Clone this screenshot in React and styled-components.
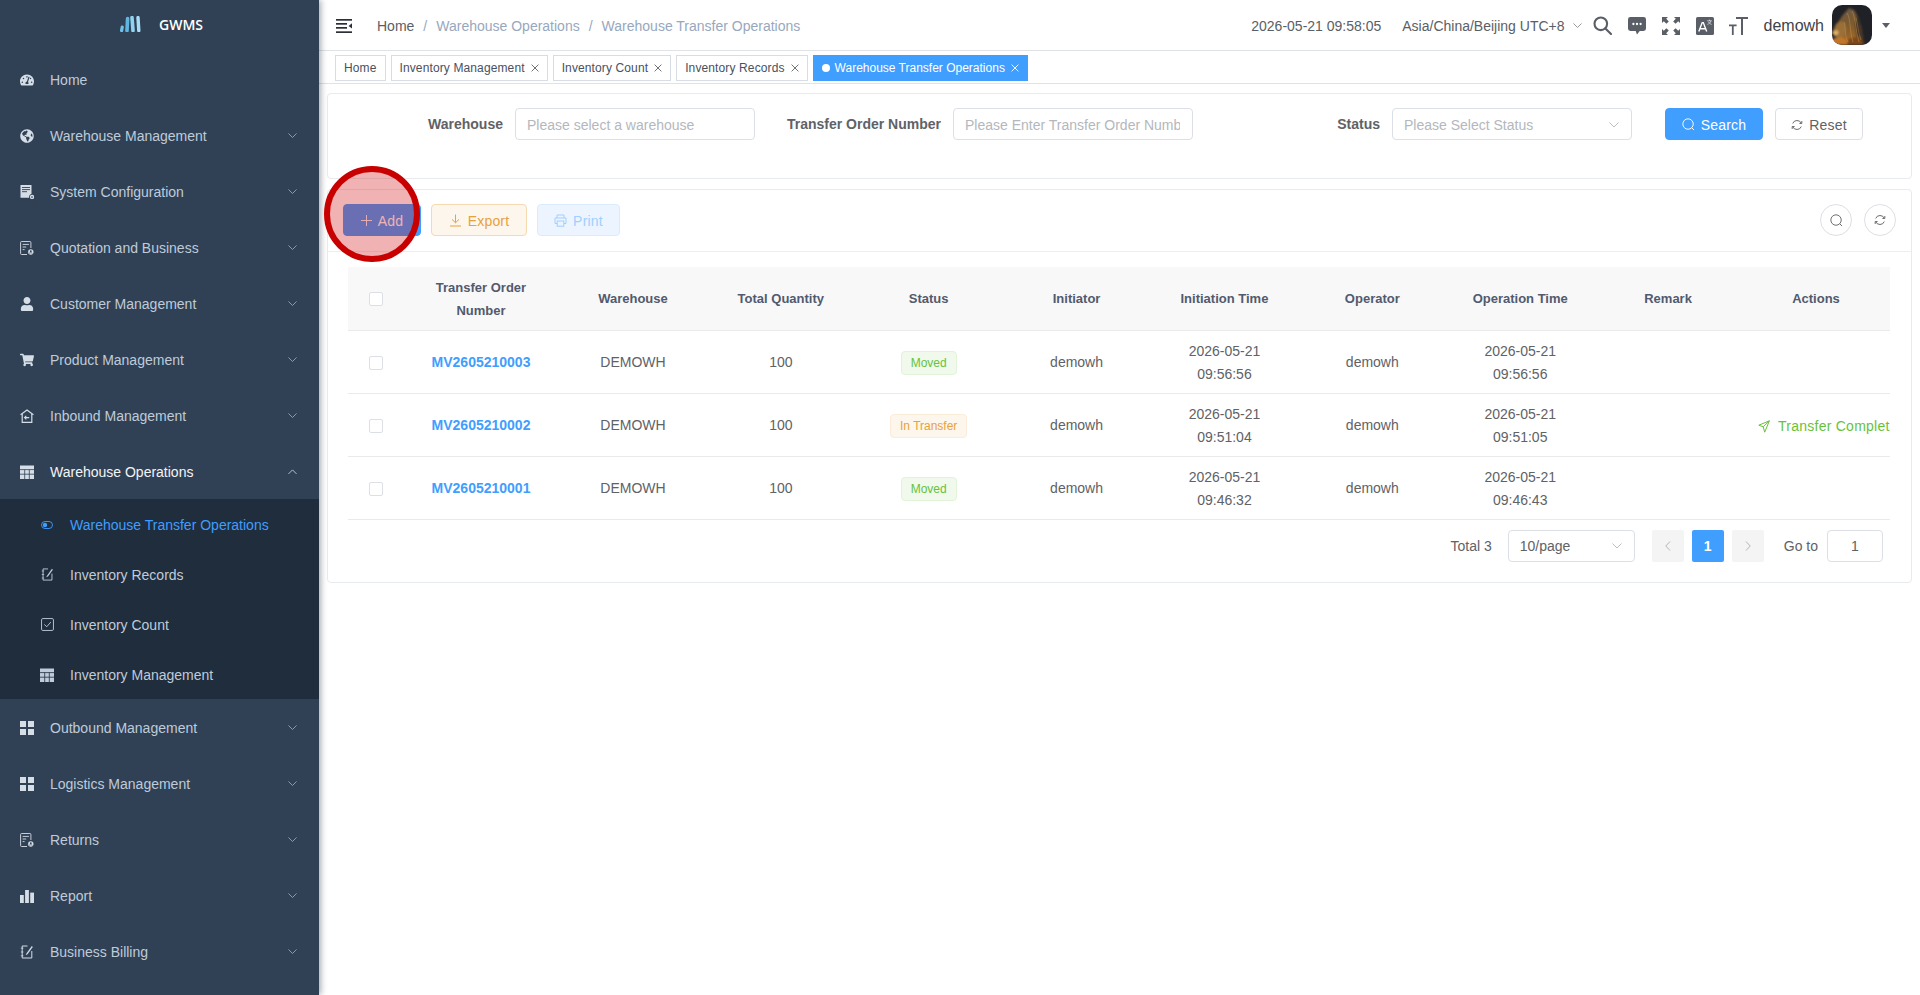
import styled, { createGlobalStyle } from 'styled-components';
import { FaTachometerAlt, FaGlobeAmericas, FaUser, FaShoppingCart } from 'react-icons/fa';

const GlobalStyle = createGlobalStyle`
  html, body {
    margin: 0;
    padding: 0;
    background: #fff;
  }
  body {
    font-family: "Liberation Sans", Arial, sans-serif;
    font-size: 14px;
    color: #606266;
  }
  * {
    box-sizing: border-box;
  }
`;

const Page = styled.div`
  display: flex;
  width: 1920px;
  height: 995px;
  overflow: hidden;
  position: relative;
`;

const Sidebar = styled.aside`
  flex: 0 0 319px;
  height: 100%;
  background: #304156;
  box-shadow: 2px 0 6px rgba(0, 21, 41, 0.35);
  z-index: 2;
`;

const LogoRow = styled.div`
  display: flex;
  align-items: center;
  gap: 17px;
  height: 48px;
  margin-bottom: 3px;
  padding-left: 120px;
`;

const LogoText = styled.span`
  color: #fff;
  font-family: "Open Sans", sans-serif;
  font-size: 14px;
  font-weight: 600;
`;

const MenuRow = styled.div`
  display: flex;
  align-items: center;
  height: 56px;
  padding: 1px 22px 0 20px;
  color: ${({ $open }) => ($open ? '#f4f4f5' : '#bfcbd9')};
`;

const MenuIcon = styled.span`
  display: flex;
  flex: 0 0 14px;
  justify-content: center;
  font-size: 14px;
  margin-right: 16px;
  color: #d5dde6;
`;

const MenuLabel = styled.span`
  flex: 1;
`;

const SubMenu = styled.div`
  background: #1f2d3d;
`;

const SubRow = styled.div`
  display: flex;
  align-items: center;
  height: 50px;
  padding: 1px 0 0 40px;
  color: ${({ $active }) => ($active ? '#409eff' : '#bfcbd9')};
`;

const SubIcon = styled.span`
  display: flex;
  flex: 0 0 14px;
  justify-content: center;
  margin-right: 16px;
  color: ${({ $active }) => ($active ? '#409eff' : '#bfcbd9')};
`;

const Main = styled.main`
  flex: 1;
  min-width: 0;
`;

const Header = styled.header`
  display: flex;
  align-items: center;
  height: 51px;
  padding: 1px 30px 0 17px;
  border-bottom: 1px solid #dfe3e8;
`;

const Breadcrumb = styled.nav`
  display: flex;
  align-items: center;
  margin-left: 25px;
  color: #97a8be;
`;

const Crumb = styled.span`
  color: ${({ $home }) => ($home ? '#5a5e66' : '#97a8be')};
`;

const Slash = styled.span`
  margin: 0 9px;
  color: #97a8be;
`;

const HeaderRight = styled.div`
  display: flex;
  align-items: center;
  margin-left: auto;
  color: #5a5e66;
`;

const Clock = styled.span`
  margin-right: 21px;
`;

const Zone = styled.span`
  display: flex;
  align-items: center;
  gap: 8px;
  margin-right: 4px;
`;

const HeaderIcon = styled.span`
  display: flex;
  justify-content: center;
  width: 34px;
  color: #5a5e66;
`;

const UserName = styled.span`
  margin-left: 8px;
  font-size: 16px;
  color: #3f4247;
`;

const Avatar = styled.span`
  display: block;
  width: 40px;
  height: 40px;
  margin: -1px 0 0 8px;
  border-radius: 10px;
  overflow: hidden;
`;

const Caret = styled.span`
  width: 0;
  height: 0;
  margin-left: 10px;
  border-left: 4px solid transparent;
  border-right: 4px solid transparent;
  border-top: 5px solid #5a5e66;
`;

const TagBar = styled.div`
  display: flex;
  gap: 5px;
  height: 33px;
  padding: 4px 0 0 16px;
  border-bottom: 1px solid #dfe3e8;
`;

const Tag = styled.span`
  display: flex;
  align-items: center;
  height: 26px;
  padding: 0 8px;
  font-size: 12px;
  letter-spacing: ${({ $active }) => ($active ? 0 : '0.12px')};
  color: ${({ $active }) => ($active ? '#fff' : '#495060')};
  background: ${({ $active }) => ($active ? '#409eff' : '#fff')};
  border: 1px solid ${({ $active }) => ($active ? '#409eff' : '#d8dce5')};
`;

const TagDot = styled.i`
  width: 8px;
  height: 8px;
  margin-right: 5px;
  border-radius: 50%;
  background: #fff;
`;

const TagClose = styled.span`
  display: flex;
  margin-left: 6px;
`;

const Content = styled.div`
  padding: 9px 8px 0;
`;

const Card = styled.section`
  border: 1px solid #e6ebf0;
  border-radius: 4px;
  background: #fff;
`;

const SearchCard = styled(Card)`
  display: flex;
  align-items: flex-start;
  height: 86px;
  padding-top: 14px;
  margin-bottom: 10px;
`;

const Field = styled.div`
  display: flex;
  align-items: center;
`;

const FieldLabel = styled.label`
  width: ${({ $width }) => $width}px;
  padding-right: 12px;
  text-align: right;
  font-weight: 700;
  color: #606266;
  white-space: nowrap;
`;

const InputBox = styled.div`
  display: flex;
  align-items: center;
  justify-content: space-between;
  width: ${({ $width }) => $width}px;
  height: 32px;
  padding: 1px 12px 0 11px;
  border: 1px solid #dcdfe6;
  border-radius: 4px;
  color: ${({ $filled }) => ($filled ? '#606266' : '#b4b7bd')};
  overflow: hidden;
  white-space: nowrap;
`;

const ClippedText = styled.span`
  display: block;
  flex: 1;
  overflow: hidden;
`;

const SearchActions = styled.div`
  display: flex;
  gap: 12px;
  margin-left: 33px;
`;

const tones = {
  primary: { color: '#fff', bg: '#409eff', border: '#409eff' },
  plain: { color: '#606266', bg: '#fff', border: '#dcdfe6' },
  warning: { color: '#e6a23c', bg: '#fdf6ec', border: '#f5dab1' },
  disabled: { color: '#a0cfff', bg: '#ecf5ff', border: '#d9ecff' },
};

const Button = styled.button`
  display: inline-flex;
  align-items: center;
  justify-content: center;
  gap: 6px;
  width: ${({ $width }) => $width}px;
  height: 32px;
  padding: 1px 0 0;
  font: inherit;
  letter-spacing: 0.2px;
  color: ${({ $tone }) => tones[$tone].color};
  background: ${({ $tone }) => tones[$tone].bg};
  border: 1px solid ${({ $tone }) => tones[$tone].border};
  border-radius: 4px;
`;

const Toolbar = styled.div`
  display: flex;
  align-items: center;
  gap: 10px;
  height: 62px;
  padding: 0 15px 1px;
  border-bottom: 1px solid #ebeef5;
`;

const ToolbarEnd = styled.div`
  display: flex;
  gap: 12px;
  margin-left: auto;
`;

const CircleButton = styled.button`
  display: flex;
  align-items: center;
  justify-content: center;
  width: 32px;
  height: 32px;
  padding: 0;
  color: #606266;
  background: #fff;
  border: 1px solid #dcdfe6;
  border-radius: 50%;
`;

const TableWrap = styled.div`
  padding: 15px 21px 0 20px;
`;

const Table = styled.table`
  width: 100%;
  table-layout: fixed;
  border-collapse: collapse;
`;

const ColCheck = styled.col`
  width: 55px;
`;

const ColOrder = styled.col`
  width: 156px;
`;

const HeadCell = styled.th`
  height: 63px;
  padding: 1px ${({ $flush }) => ($flush ? 0 : '18px')} 0;
  font-size: 13px;
  font-weight: 700;
  line-height: 23px;
  color: #515a6e;
  text-align: center;
  background: #f8f8f9;
  border-bottom: 1px solid #e8eaec;
`;

const Cell = styled.td`
  height: 63px;
  padding: 2px ${({ $flush }) => ($flush ? 0 : '18px')} 0;
  line-height: 23px;
  text-align: center;
  color: #606266;
  border-bottom: 1px solid #e8eaec;
`;

const ActionCell = styled(Cell)`
  padding: 5px 0 0 16px;
  text-align: left;
  overflow: hidden;
  white-space: nowrap;
`;

const Checkbox = styled.span`
  display: block;
  width: 14px;
  height: 14px;
  margin: 0 auto 0 21px;
  border: 1px solid #dcdfe6;
  border-radius: 2px;
  background: #fff;
`;

const OrderLink = styled.a`
  font-weight: 700;
  color: #409eff;
`;

const Status = styled.span`
  display: inline-block;
  height: 24px;
  padding: 0 9px;
  font-size: 12px;
  line-height: 22px;
  border-radius: 4px;
  color: ${({ $moved }) => ($moved ? '#67c23a' : '#e6a23c')};
  background: ${({ $moved }) => ($moved ? '#f0f9eb' : '#fdf6ec')};
  border: 1px solid ${({ $moved }) => ($moved ? '#e1f3d8' : '#faecd8')};
`;

const ActionLink = styled.span`
  display: inline-flex;
  align-items: center;
  gap: 8px;
  letter-spacing: 0.25px;
  color: #67c23a;
`;

const Pagination = styled.div`
  display: flex;
  align-items: center;
  justify-content: flex-end;
  height: 32px;
  margin: 10px 7px 20px 0;
  color: #606266;
`;

const PageButton = styled.span`
  display: flex;
  align-items: center;
  justify-content: center;
  width: 32px;
  height: 32px;
  margin-left: ${({ $gap }) => $gap}px;
  border-radius: 2px;
  font-weight: ${({ $current }) => ($current ? 700 : 400)};
  color: ${({ $current }) => ($current ? '#fff' : '#b0b5bd')};
  background: ${({ $current }) => ($current ? '#409eff' : '#f4f4f5')};
`;

const PageSize = styled.span`
  margin-left: 16px;
`;

const GoTo = styled.span`
  margin: 0 9px 0 20px;
`;

const GoInput = styled.span`
  display: flex;
  align-items: center;
  justify-content: center;
  width: 56px;
  height: 32px;
  border: 1px solid #dcdfe6;
  border-radius: 4px;
`;

const Highlight = styled.div`
  position: absolute;
  left: 324px;
  top: 166px;
  width: 96px;
  height: 96px;
  border: 6px solid #c80000;
  border-radius: 50%;
  background: rgba(204, 0, 0, 0.3);
  z-index: 5;
`;

const Chevron = ({ up, size = 9, color = '#a5b1c0' }) => (
  <svg width={size} height={size * 0.6} viewBox="0 0 10 6" fill="none" stroke={color} strokeWidth="0.9">
    <path d={up ? 'M0.5 5.5 5 1l4.5 4.5' : 'M0.5 0.5 5 5l4.5-4.5'} />
  </svg>
);

const Svg = ({ size = 14, box = 14, children, ...rest }) => (
  <svg width={size} height={size} viewBox={`0 0 ${box} ${box}`} fill="currentColor" {...rest}>
    {children}
  </svg>
);

const LogoMark = () => (
  <svg width="22" height="16" viewBox="0 0 22 16">
    <g strokeLinecap="round" fill="none">
      <path d="M2.2 11.2l-.6 3.4" strokeWidth="3.2" stroke="#6fc3ea" />
      <path d="M7.6 2.5 7 14.6" strokeWidth="3.6" stroke="#5fb6e2" />
      <path d="M12 1.6l1 13" strokeWidth="3.6" stroke="#8ed3f0" />
      <path d="M18 1.6l.8 13" strokeWidth="3.4" stroke="#a8def5" />
    </g>
  </svg>
);

const ConfigIcon = () => (
  <Svg>
    <path d="M0.5 0h11v8.8a3.8 3.8 0 0 0-2.4 4H.5z" />
    <path d="M2 2.5h8M2 4.6h8M2 6.7h5" stroke="#304156" strokeWidth="0.9" />
    <circle cx="12" cy="12" r="1.5" fill="none" stroke="currentColor" strokeWidth="1.3" />
  </Svg>
);

const QuoteIcon = () => (
  <Svg fill="none" stroke="currentColor" strokeWidth="0.9">
    <path d="M7 13.5H1.6a1 1 0 0 1-1-1V1.5a1 1 0 0 1 1-1h8.3a1 1 0 0 1 1 1V7" />
    <path d="M2.6 3.4h6.3M2.6 6h3.6M2.6 8.6h2" />
    <circle cx="10.8" cy="11" r="2.7" fill="currentColor" stroke="none" />
    <circle cx="10.8" cy="10.2" r="0.9" fill="#304156" stroke="none" />
    <path d="M9.2 12.4c.5-.9 2.7-.9 3.2 0" stroke="#304156" strokeWidth="0.7" />
  </Svg>
);

const InboundIcon = () => (
  <Svg fill="none" stroke="currentColor" strokeWidth="1.2">
    <path d="M0.6 5.8 7 0.9l6.4 4.9" />
    <path d="M2.2 5v8.3h9.6V5" />
    <path d="M4.6 8.6h4.6M6.3 6.9 4.6 8.6l1.7 1.7" strokeWidth="1.1" />
  </Svg>
);

const TableIcon = ({ heavy }) => (
  <Svg>
    <rect x="0" y="0.5" width="14" height="13.5" />
    <path d="M0 4.6h14M0 9.2h14M4.7 4.6V14M9.3 4.6V14" stroke={heavy ? '#304156' : '#1f2d3d'} strokeWidth="0.8" />
  </Svg>
);

const GridIcon = () => (
  <Svg>
    <rect x="0" y="0" width="6" height="6" />
    <rect x="8" y="0" width="6" height="6" />
    <rect x="0" y="8" width="6" height="6" />
    <rect x="8" y="8" width="6" height="6" />
  </Svg>
);

const ToggleIcon = () => (
  <svg width="12" height="8" viewBox="0 0 12 8" fill="none" stroke="currentColor" strokeWidth="0.9">
    <rect x="0.5" y="0.5" width="11" height="7" rx="3.5" />
    <circle cx="4" cy="4" r="2.2" fill="currentColor" stroke="none" />
  </svg>
);

const EditIcon = ({ size = 13 }) => (
  <Svg size={size} fill="none" stroke="currentColor" strokeWidth="1">
    <path d="M7.5 1H2.2v12h9.6V6" />
    <path d="M0.8 3.2h2.6M0.8 7h2.6M0.8 10.8h2.6" strokeWidth="0.8" />
    <path d="M11.8 0.9 6.6 8.2 5.6 10l1.9-.8 5.3-7.3z" fill="currentColor" stroke="none" />
  </Svg>
);

const CheckIcon = () => (
  <Svg size={13} fill="none" stroke="currentColor" strokeWidth="1">
    <rect x="0.6" y="0.6" width="12.8" height="12.8" rx="1.4" />
    <path d="M3.6 7 6.2 9.4l4.4-5" />
  </Svg>
);

const BarsIcon = () => (
  <Svg>
    <rect x="0" y="6" width="3.8" height="8" />
    <rect x="5.1" y="1" width="3.8" height="13" />
    <rect x="10.2" y="3.6" width="3.8" height="10.4" />
  </Svg>
);

const BurgerIcon = () => (
  <svg width="16" height="14" viewBox="0 0 16 14" fill="#2b2f36">
    <rect x="0" y="0" width="16" height="1.7" />
    <rect x="0" y="4" width="11" height="1.7" />
    <rect x="0" y="8" width="11" height="1.7" />
    <rect x="0" y="12.3" width="16" height="1.7" />
    <path d="M16 4.2v5.4l-3.4-2.7z" />
  </svg>
);

const SearchGlyph = () => (
  <svg width="19" height="19" viewBox="0 0 19 19" fill="none" stroke="currentColor" strokeWidth="2.1">
    <circle cx="7.8" cy="7.8" r="6.3" />
    <path d="M12.4 12.4 18 18" strokeLinecap="round" />
  </svg>
);

const ChatGlyph = () => (
  <svg width="18" height="18" viewBox="0 0 18 18" fill="currentColor">
    <path d="M2.4 0h13.2A2.4 2.4 0 0 1 18 2.4v9.2a2.4 2.4 0 0 1-2.4 2.4h-3.9L9 17.6 7.7 14H2.4A2.4 2.4 0 0 1 0 11.6V2.4A2.4 2.4 0 0 1 2.4 0z" />
    <circle cx="5.4" cy="7" r="1.15" fill="#fff" />
    <circle cx="9" cy="7" r="1.15" fill="#fff" />
    <circle cx="12.6" cy="7" r="1.15" fill="#fff" />
  </svg>
);

const FullGlyph = () => (
  <svg width="18" height="18" viewBox="0 0 18 18" fill="currentColor">
    <path d="M0 0h6L4.2 1.8l2.6 2.6-2.4 2.4-2.6-2.6L0 6zM18 0v6l-1.8-1.8-2.6 2.6-2.4-2.4 2.6-2.6L12 0zM0 18v-6l1.8 1.8 2.6-2.6 2.4 2.4-2.6 2.6L6 18zM18 18h-6l1.8-1.8-2.6-2.6 2.4-2.4 2.6 2.6L18 12z" />
  </svg>
);

const TranslateGlyph = () => (
  <svg width="18" height="18" viewBox="0 0 18 18">
    <rect width="18" height="18" rx="1.6" fill="currentColor" />
    <path d="M2.8 14.5 6.2 5.6h1.1l3.4 8.9M4 11.8h5.5" fill="none" stroke="#fff" strokeWidth="1.4" />
    <path d="M11.2 3.8h4.6M13.5 2.6v1.2M14.9 3.8c-.4 1.8-1.8 3.1-3.5 3.6M12.4 4.8c.5 1.2 1.7 2.2 3.3 2.6" fill="none" stroke="#fff" strokeWidth="0.6" />
  </svg>
);

const FontGlyph = () => (
  <svg width="19" height="18" viewBox="0 0 19 18" fill="currentColor">
    <path d="M7 0h12v1.9h-5V18h-2V1.9H7zM0 7.6h7.6v1.7H4.7V18H2.9V9.3H0z" />
  </svg>
);

const LionAvatar = () => (
  <svg width="40" height="40" viewBox="0 0 40 40">
    <defs>
      <linearGradient id="mane" x1="0.3" y1="0" x2="0.5" y2="1">
        <stop offset="0" stopColor="#6d5b46" />
        <stop offset="0.45" stopColor="#7d5a2e" />
        <stop offset="1" stopColor="#a86d28" />
      </linearGradient>
      <filter id="soft"><feGaussianBlur stdDeviation="0.8" /></filter>
    </defs>
    <rect width="40" height="40" fill="#202126" />
    <g filter="url(#soft)">
      <path d="M5 19 10 11l7-8 5 2 4 7 3 10 3 18H3z" fill="url(#mane)" />
      <path d="M25 9l3 11 4 20h-6l-3-20z" fill="#3e3126" />
      <path d="M1 26l3-7 4-3 5 2 1 7-2 7-5 2-4-3-3-3z" fill="#9a7038" />
      <path d="M0 27l5-2 2 3-4 3z" fill="#e0b36e" />
      <path d="M0 34l9-2 7 3v5H0z" fill="#c2762a" />
      <path d="M16 34l12-3 3 9H15z" fill="#7d4a1b" />
    </g>
    <path d="M15 8c4 6 2 16 6 29M20 6c4 7 3 17 7 31M12 17c2 6 0 12 4 20M24 13c2 7 2 14 5 22" stroke="#d6a35c" strokeWidth="0.7" fill="none" opacity="0.55" />
  </svg>
);

const CloseX = ({ color = '#606266' }) => (
  <svg width="8" height="8" viewBox="0 0 8 8" fill="none" stroke={color} strokeWidth="0.9">
    <path d="M.6.6l6.8 6.8M7.4.6.6 7.4" />
  </svg>
);

const PlusGlyph = () => (
  <svg width="11" height="11" viewBox="0 0 12 12" fill="none" stroke="currentColor" strokeWidth="1">
    <path d="M6 0v12M0 6h12" />
  </svg>
);

const LensGlyph = ({ size = 13 }) => (
  <svg width={size} height={size} viewBox="0 0 14 14" fill="none" stroke="currentColor" strokeWidth="1">
    <circle cx="6.5" cy="6.5" r="5.6" />
    <path d="M10.5 10.5 13 13" />
  </svg>
);

const RefreshGlyph = () => (
  <svg width="12" height="12" viewBox="0 0 14 14" fill="none" stroke="currentColor" strokeWidth="1.1">
    <path d="M2 5.2A5.4 5.4 0 0 1 12 5M12 8.8A5.4 5.4 0 0 1 2 9" />
    <path d="M12.6 2.4V5.2H9.8M1.4 11.6V8.8h2.8" />
  </svg>
);

const DownloadGlyph = () => (
  <svg width="13" height="13" viewBox="0 0 13 13" fill="none" stroke="currentColor" strokeWidth="1">
    <path d="M6.5 0.5v8M3 5.4l3.5 3.4L10 5.4M1 12h11" />
  </svg>
);

const PrintGlyph = () => (
  <svg width="13" height="13" viewBox="0 0 13 13" fill="none" stroke="currentColor" strokeWidth="1">
    <path d="M3 4V1h7v3M3 9.5H1V4h11v5.5h-2" />
    <rect x="3.2" y="7" width="6.6" height="5.2" />
  </svg>
);

const SendGlyph = () => (
  <svg width="12" height="13" viewBox="0 0 12 13" fill="none" stroke="currentColor" strokeWidth="1">
    <path d="M11.4.8.8 5.2l4.4 1.6 1.5 5.4z" />
    <path d="M5.2 6.8 11.4.8" />
  </svg>
);

const PageArrow = ({ left }) => (
  <svg width="6" height="10" viewBox="0 0 6 10" fill="none" stroke="currentColor" strokeWidth="1">
    <path d={left ? 'M5 .5.8 5 5 9.5' : 'M1 .5 5.2 5 1 9.5'} />
  </svg>
);

const topMenu = [
  { label: 'Home', icon: <FaTachometerAlt />, plain: true },
  { label: 'Warehouse Management', icon: <FaGlobeAmericas /> },
  { label: 'System Configuration', icon: <ConfigIcon /> },
  { label: 'Quotation and Business', icon: <QuoteIcon /> },
  { label: 'Customer Management', icon: <FaUser /> },
  { label: 'Product Management', icon: <FaShoppingCart /> },
  { label: 'Inbound Management', icon: <InboundIcon /> },
];

const bottomMenu = [
  { label: 'Outbound Management', icon: <GridIcon /> },
  { label: 'Logistics Management', icon: <GridIcon /> },
  { label: 'Returns', icon: <QuoteIcon /> },
  { label: 'Report', icon: <BarsIcon /> },
  { label: 'Business Billing', icon: <EditIcon size={14} /> },
];

const subMenu = [
  { label: 'Warehouse Transfer Operations', icon: <ToggleIcon />, active: true },
  { label: 'Inventory Records', icon: <EditIcon /> },
  { label: 'Inventory Count', icon: <CheckIcon /> },
  { label: 'Inventory Management', icon: <TableIcon /> },
];

const tags = ['Inventory Management', 'Inventory Count', 'Inventory Records'];

const columns = ['Warehouse', 'Total Quantity', 'Status', 'Initiator', 'Initiation Time', 'Operator', 'Operation Time', 'Remark', 'Actions'];

const rows = [
  { no: 'MV2605210003', moved: true, start: '2026-05-21 09:56:56', end: '2026-05-21 09:56:56' },
  { no: 'MV2605210002', moved: false, start: '2026-05-21 09:51:04', end: '2026-05-21 09:51:05' },
  { no: 'MV2605210001', moved: true, start: '2026-05-21 09:46:32', end: '2026-05-21 09:46:43' },
];

const MenuItem = ({ item }) => (
  <MenuRow>
    <MenuIcon>{item.icon}</MenuIcon>
    <MenuLabel>{item.label}</MenuLabel>
    {!item.plain && <Chevron />}
  </MenuRow>
);

export default function App() {
  return (
    <Page>
      <GlobalStyle />
      <Sidebar>
        <LogoRow>
          <LogoMark />
          <LogoText>GWMS</LogoText>
        </LogoRow>
        {topMenu.map((item) => <MenuItem key={item.label} item={item} />)}
        <MenuRow $open>
          <MenuIcon><TableIcon heavy /></MenuIcon>
          <MenuLabel>Warehouse Operations</MenuLabel>
          <Chevron up color="#d5dde6" />
        </MenuRow>
        <SubMenu>
          {subMenu.map((item) => (
            <SubRow key={item.label} $active={item.active}>
              <SubIcon $active={item.active}>{item.icon}</SubIcon>
              {item.label}
            </SubRow>
          ))}
        </SubMenu>
        {bottomMenu.map((item) => <MenuItem key={item.label} item={item} />)}
      </Sidebar>

      <Main>
        <Header>
          <BurgerIcon />
          <Breadcrumb>
            <Crumb $home>Home</Crumb>
            <Slash>/</Slash>
            <Crumb>Warehouse Operations</Crumb>
            <Slash>/</Slash>
            <Crumb>Warehouse Transfer Operations</Crumb>
          </Breadcrumb>
          <HeaderRight>
            <Clock>2026-05-21 09:58:05</Clock>
            <Zone>Asia/China/Beijing UTC+8 <Chevron color="#7c8087" /></Zone>
            <HeaderIcon><SearchGlyph /></HeaderIcon>
            <HeaderIcon><ChatGlyph /></HeaderIcon>
            <HeaderIcon><FullGlyph /></HeaderIcon>
            <HeaderIcon><TranslateGlyph /></HeaderIcon>
            <HeaderIcon><FontGlyph /></HeaderIcon>
            <UserName>demowh</UserName>
            <Avatar><LionAvatar /></Avatar>
            <Caret />
          </HeaderRight>
        </Header>

        <TagBar>
          <Tag>Home</Tag>
          {tags.map((tag) => (
            <Tag key={tag}>{tag}<TagClose><CloseX /></TagClose></Tag>
          ))}
          <Tag $active>
            <TagDot />
            Warehouse Transfer Operations
            <TagClose><CloseX color="#fff" /></TagClose>
          </Tag>
        </TagBar>

        <Content>
          <SearchCard>
            <Field>
              <FieldLabel $width={187}>Warehouse</FieldLabel>
              <InputBox $width={240}>Please select a warehouse</InputBox>
            </Field>
            <Field>
              <FieldLabel $width={198}>Transfer Order Number</FieldLabel>
              <InputBox $width={240}><ClippedText>Please Enter Transfer Order Number</ClippedText></InputBox>
            </Field>
            <Field>
              <FieldLabel $width={199}>Status</FieldLabel>
              <InputBox $width={240}>Please Select Status <Chevron size={10} color="#b4b7bd" /></InputBox>
            </Field>
            <SearchActions>
              <Button $tone="primary" $width={98}><LensGlyph />Search</Button>
              <Button $tone="plain" $width={88}><RefreshGlyph />Reset</Button>
            </SearchActions>
          </SearchCard>

          <Card>
            <Toolbar>
              <Button $tone="primary" $width={78}><PlusGlyph />Add</Button>
              <Button $tone="warning" $width={96}><DownloadGlyph />Export</Button>
              <Button $tone="disabled" $width={83}><PrintGlyph />Print</Button>
              <ToolbarEnd>
                <CircleButton><LensGlyph /></CircleButton>
                <CircleButton><RefreshGlyph /></CircleButton>
              </ToolbarEnd>
            </Toolbar>
            <TableWrap>
              <Table>
                <colgroup>
                  <ColCheck />
                  <ColOrder />
                </colgroup>
                <thead>
                  <tr>
                    <HeadCell $flush><Checkbox /></HeadCell>
                    <HeadCell>Transfer Order Number</HeadCell>
                    {columns.map((col) => <HeadCell key={col}>{col}</HeadCell>)}
                  </tr>
                </thead>
                <tbody>
                  {rows.map((row) => (
                    <tr key={row.no}>
                      <Cell $flush><Checkbox /></Cell>
                      <Cell><OrderLink>{row.no}</OrderLink></Cell>
                      <Cell>DEMOWH</Cell>
                      <Cell>100</Cell>
                      <Cell><Status $moved={row.moved}>{row.moved ? 'Moved' : 'In Transfer'}</Status></Cell>
                      <Cell>demowh</Cell>
                      <Cell>{row.start}</Cell>
                      <Cell>demowh</Cell>
                      <Cell>{row.end}</Cell>
                      <Cell />
                      <ActionCell>
                        {!row.moved && <ActionLink><SendGlyph />Transfer Complete</ActionLink>}
                      </ActionCell>
                    </tr>
                  ))}
                </tbody>
              </Table>
              <Pagination>
                <span>Total 3</span>
                <PageSize>
                  <InputBox $width={127} $filled>10/page <Chevron size={10} color="#b4b7bd" /></InputBox>
                </PageSize>
                <PageButton $gap={17}><PageArrow left /></PageButton>
                <PageButton $gap={8} $current>1</PageButton>
                <PageButton $gap={8}><PageArrow /></PageButton>
                <GoTo>Go to</GoTo>
                <GoInput>1</GoInput>
              </Pagination>
            </TableWrap>
          </Card>
        </Content>
      </Main>
      <Highlight />
    </Page>
  );
}
